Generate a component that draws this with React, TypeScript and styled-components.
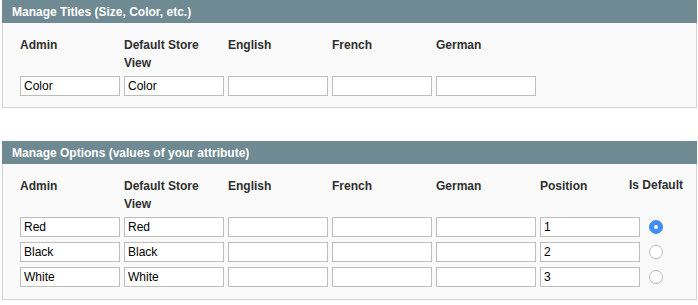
import React from 'react';
import styled, { createGlobalStyle } from 'styled-components';

const GlobalStyle = createGlobalStyle`
  html, body {
    margin: 0;
    padding: 0;
    background: #fff;
  }
  body {
    font-family: 'Liberation Sans', Arial, sans-serif;
    font-size: 12px;
    color: #2f2f2f;
  }
`;

const Page = styled.div`
  padding: 0 1px 0 2px;
  display: flex;
  flex-direction: column;
  gap: 33px;
`;

const Section = styled.section`
  display: flex;
  flex-direction: column;
`;

const SectionHeader = styled.h4`
  margin: 0;
  box-sizing: border-box;
  height: 23px;
  line-height: 21px;
  padding: 2px 10px 0;
  background: #6f8a93;
  color: #fff;
  font-size: 12px;
  font-weight: bold;
`;

const SectionBody = styled.div<{ $bottom: number }>`
  background: #fafafa;
  border: 1px solid #d3d3d3;
  border-top: none;
  padding: 12px 17px ${(p) => p.$bottom}px;
`;

const Grid = styled.div<{ $cols: number; $last?: boolean }>`
  display: grid;
  grid-template-columns: repeat(${(p) => p.$cols}, 100px) ${(p) => (p.$last ? '24px' : '')};
  column-gap: 4px;
  row-gap: 5px;
`;

const Label = styled.div`
  box-sizing: border-box;
  font-weight: bold;
  font-size: 12px;
  line-height: 18px;
  color: #2f2f2f;
  height: 36px;
  padding: 1px 6px 0 0;
`;

const CenterLabel = styled(Label)`
  display: flex;
  justify-content: center;
  white-space: nowrap;
  padding: 0;
`;

const TextInput = styled.input`
  box-sizing: border-box;
  width: 100px;
  height: 20px;
  margin: 0;
  padding: 0 3px;
  border: 1px solid #bdbdbd;
  background: #fff;
  font-family: 'Liberation Sans', Arial, sans-serif;
  font-size: 12px;
  color: #000;
  outline: none;
`;

const RadioCell = styled.div`
  display: flex;
  align-items: center;
  justify-content: center;
`;

const Radio = styled.span<{ $checked?: boolean }>`
  box-sizing: border-box;
  width: 14px;
  height: 14px;
  border-radius: 50%;
  border: 1px solid ${(p) => (p.$checked ? '#3d8ef0' : '#b9b9b9')};
  background: ${(p) => (p.$checked ? '#3d8ef0' : '#fff')};
  display: flex;
  align-items: center;
  justify-content: center;
  &::after {
    content: '';
    width: 4px;
    height: 4px;
    border-radius: 50%;
    background: ${(p) => (p.$checked ? '#fff' : 'transparent')};
  }
`;

const stores = ['Admin', 'Default Store View', 'English', 'French', 'German'];

const titles = ['Color', 'Color', '', '', ''];

const options = [
  { admin: 'Red', store: 'Red', position: '1', isDefault: true },
  { admin: 'Black', store: 'Black', position: '2', isDefault: false },
  { admin: 'White', store: 'White', position: '3', isDefault: false },
];

const App = () => (
  <>
    <GlobalStyle />
    <Page>
      <Section>
        <SectionHeader>Manage Titles (Size, Color, etc.)</SectionHeader>
        <SectionBody $bottom={11}>
          <Grid $cols={5}>
            {stores.map((s) => (
              <Label key={s}>{s}</Label>
            ))}
            {titles.map((t, i) => (
              <TextInput key={i} defaultValue={t} />
            ))}
          </Grid>
        </SectionBody>
      </Section>

      <Section>
        <SectionHeader>Manage Options (values of your attribute)</SectionHeader>
        <SectionBody $bottom={12}>
          <Grid $cols={6} $last>
            {stores.map((s) => (
              <Label key={s}>{s}</Label>
            ))}
            <Label>Position</Label>
            <CenterLabel>Is Default</CenterLabel>
            {options.map((o) => (
              <React.Fragment key={o.admin}>
                <TextInput defaultValue={o.admin} />
                <TextInput defaultValue={o.store} />
                <TextInput />
                <TextInput />
                <TextInput />
                <TextInput defaultValue={o.position} />
                <RadioCell>
                  <Radio $checked={o.isDefault} />
                </RadioCell>
              </React.Fragment>
            ))}
          </Grid>
        </SectionBody>
      </Section>
    </Page>
  </>
);

export default App;
